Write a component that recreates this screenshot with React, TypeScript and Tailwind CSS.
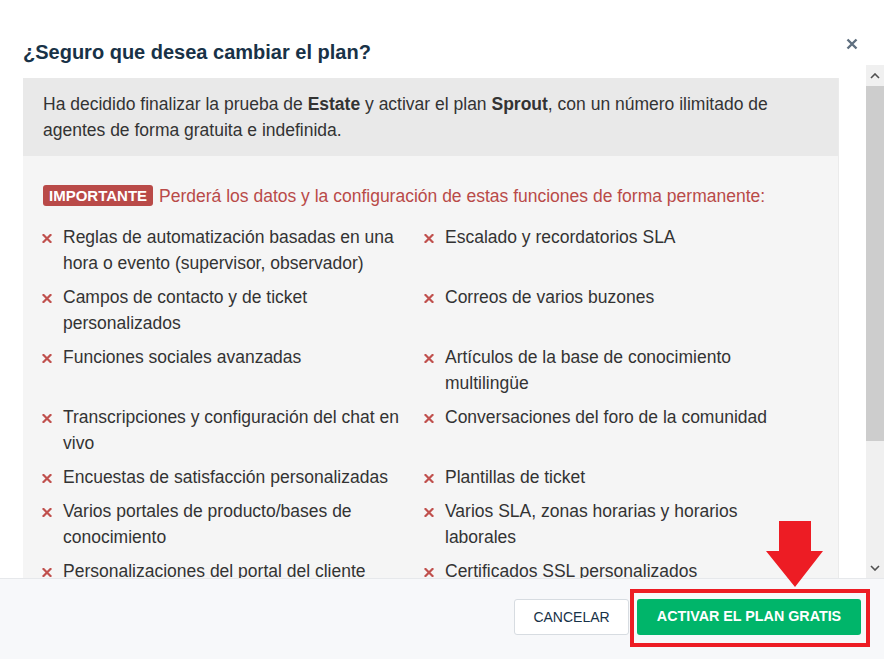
import React from 'react'

const FEATURES: [string, string][] = [
  ['Reglas de automatización basadas en una hora o evento (supervisor, observador)', 'Escalado y recordatorios SLA'],
  ['Campos de contacto y de ticket personalizados', 'Correos de varios buzones'],
  ['Funciones sociales avanzadas', 'Artículos de la base de conocimiento multilingüe'],
  ['Transcripciones y configuración del chat en vivo', 'Conversaciones del foro de la comunidad'],
  ['Encuestas de satisfacción personalizadas', 'Plantillas de ticket'],
  ['Varios portales de producto/bases de conocimiento', 'Varios SLA, zonas horarias y horarios laborales'],
  ['Personalizaciones del portal del cliente', 'Certificados SSL personalizados'],
  ['Roles de agente personalizados', 'Informes y paneles avanzados'],
]

function XMark() {
  return (
    <svg width="10" height="9" viewBox="0 0 10 9" className="mt-[3px]">
      <path d="M1.5 1 L8.5 8 M8.5 1 L1.5 8" stroke="#c0504d" strokeWidth="2.2" strokeLinecap="square" />
    </svg>
  )
}

function Feature({ text }: { text: string }) {
  return (
    <div className="flex">
      <div className="w-[20px] h-[26px] flex items-center shrink-0 -ml-[1px]">
        <XMark />
      </div>
      <span className="max-w-[350px] ml-[1px]">{text}</span>
    </div>
  )
}

export default function App() {
  return (
    <div
      className="relative w-[884px] h-[659px] bg-white flex flex-col overflow-hidden"
      style={{ fontFamily: '"Liberation Sans", Arial, sans-serif' }}
    >
      {/* Header */}
      <div className="h-[65px] flex items-start justify-between pl-[23px] pr-[26px] pt-[40px] shrink-0">
        <h1 className="text-[20px] leading-[24px] font-bold text-[#183247]">¿Seguro que desea cambiar el plan?</h1>
        <button className="mt-[-2px] w-[12px] h-[12px] flex items-center justify-center">
          <svg width="12" height="12" viewBox="0 0 12 12">
            <path d="M1.5 1.5 L10.5 10.5 M10.5 1.5 L1.5 10.5" stroke="#5f6f7f" strokeWidth="2.4" />
          </svg>
        </button>
      </div>

      {/* Scroll area */}
      <div className="flex h-[513px] shrink-0">
        <div className="flex-1 overflow-hidden pt-[13px] pl-[23px]">
          <div className="w-[816px] text-[17.5px] leading-[26px] text-[#333333] border-r border-[#ebebeb]">
            <div className="bg-[#e9e9e9] px-5 py-[13px]">
              Ha decidido finalizar la prueba de <b>Estate</b> y activar el plan <b>Sprout</b>, con un número ilimitado de
              agentes de forma gratuita e indefinida.
            </div>
            <div className="bg-[#f5f5f5] px-5 pt-[29px] pb-6">
              <div className="flex items-center h-[21px]">
                <span className="bg-[#b94a48] text-white font-bold text-[15px] leading-[21px] h-[21px] px-[6px] rounded-[3px]">
                  IMPORTANTE
                </span>
                <span className="ml-[6px] text-[#b94a48] whitespace-nowrap">
                  Perderá los datos y la configuración de estas funciones de forma permanente:
                </span>
              </div>
              <div className="mt-[18px] grid grid-cols-[382px_1fr] gap-y-[8px]">
                {FEATURES.map(([left, right]) => (
                  <React.Fragment key={left}>
                    <Feature text={left} />
                    <Feature text={right} />
                  </React.Fragment>
                ))}
              </div>
            </div>
          </div>
        </div>

        {/* Scrollbar */}
        <div className="w-[18px] bg-[#f0f0f0] flex flex-col">
          <div className="h-[21px] flex items-center justify-center">
            <svg width="10" height="6" viewBox="0 0 10 6">
              <path d="M1 5 L5 1 L9 5" stroke="#505050" strokeWidth="1.6" fill="none" />
            </svg>
          </div>
          <div className="h-[355px] bg-[#cdcdcd]" />
          <div className="flex-1" />
          <div className="h-[21px] flex items-center justify-center">
            <svg width="10" height="6" viewBox="0 0 10 6">
              <path d="M1 1 L5 5 L9 1" stroke="#505050" strokeWidth="1.6" fill="none" />
            </svg>
          </div>
        </div>
      </div>

      {/* Footer */}
      <div className="flex-1 border-t border-[#e6e8eb] bg-[#f7f8fa] flex justify-end items-start pt-[20px] pr-[23px] gap-[8px]">
        <button className="h-[36px] w-[115px] bg-white border border-[#d7dce1] rounded-[3px] text-[14px] text-[#183247]">
          CANCELAR
        </button>
        <button className="h-[36px] w-[224px] bg-[#00b56a] rounded-[3px] text-[14.3px] font-bold text-white">
          ACTIVAR EL PLAN GRATIS
        </button>
      </div>

      {/* Annotation overlays */}
      <div className="absolute left-[630px] top-[589px] w-[240px] h-[58px] border-[4px] border-[#ed1c24]" />
      <svg className="absolute left-[766px] top-[521px]" width="58" height="67" viewBox="0 0 58 67">
        <path d="M13 0 H45 V30 H57 L29 66 L0 30 H13 Z" fill="#ed1c24" />
      </svg>
    </div>
  )
}
